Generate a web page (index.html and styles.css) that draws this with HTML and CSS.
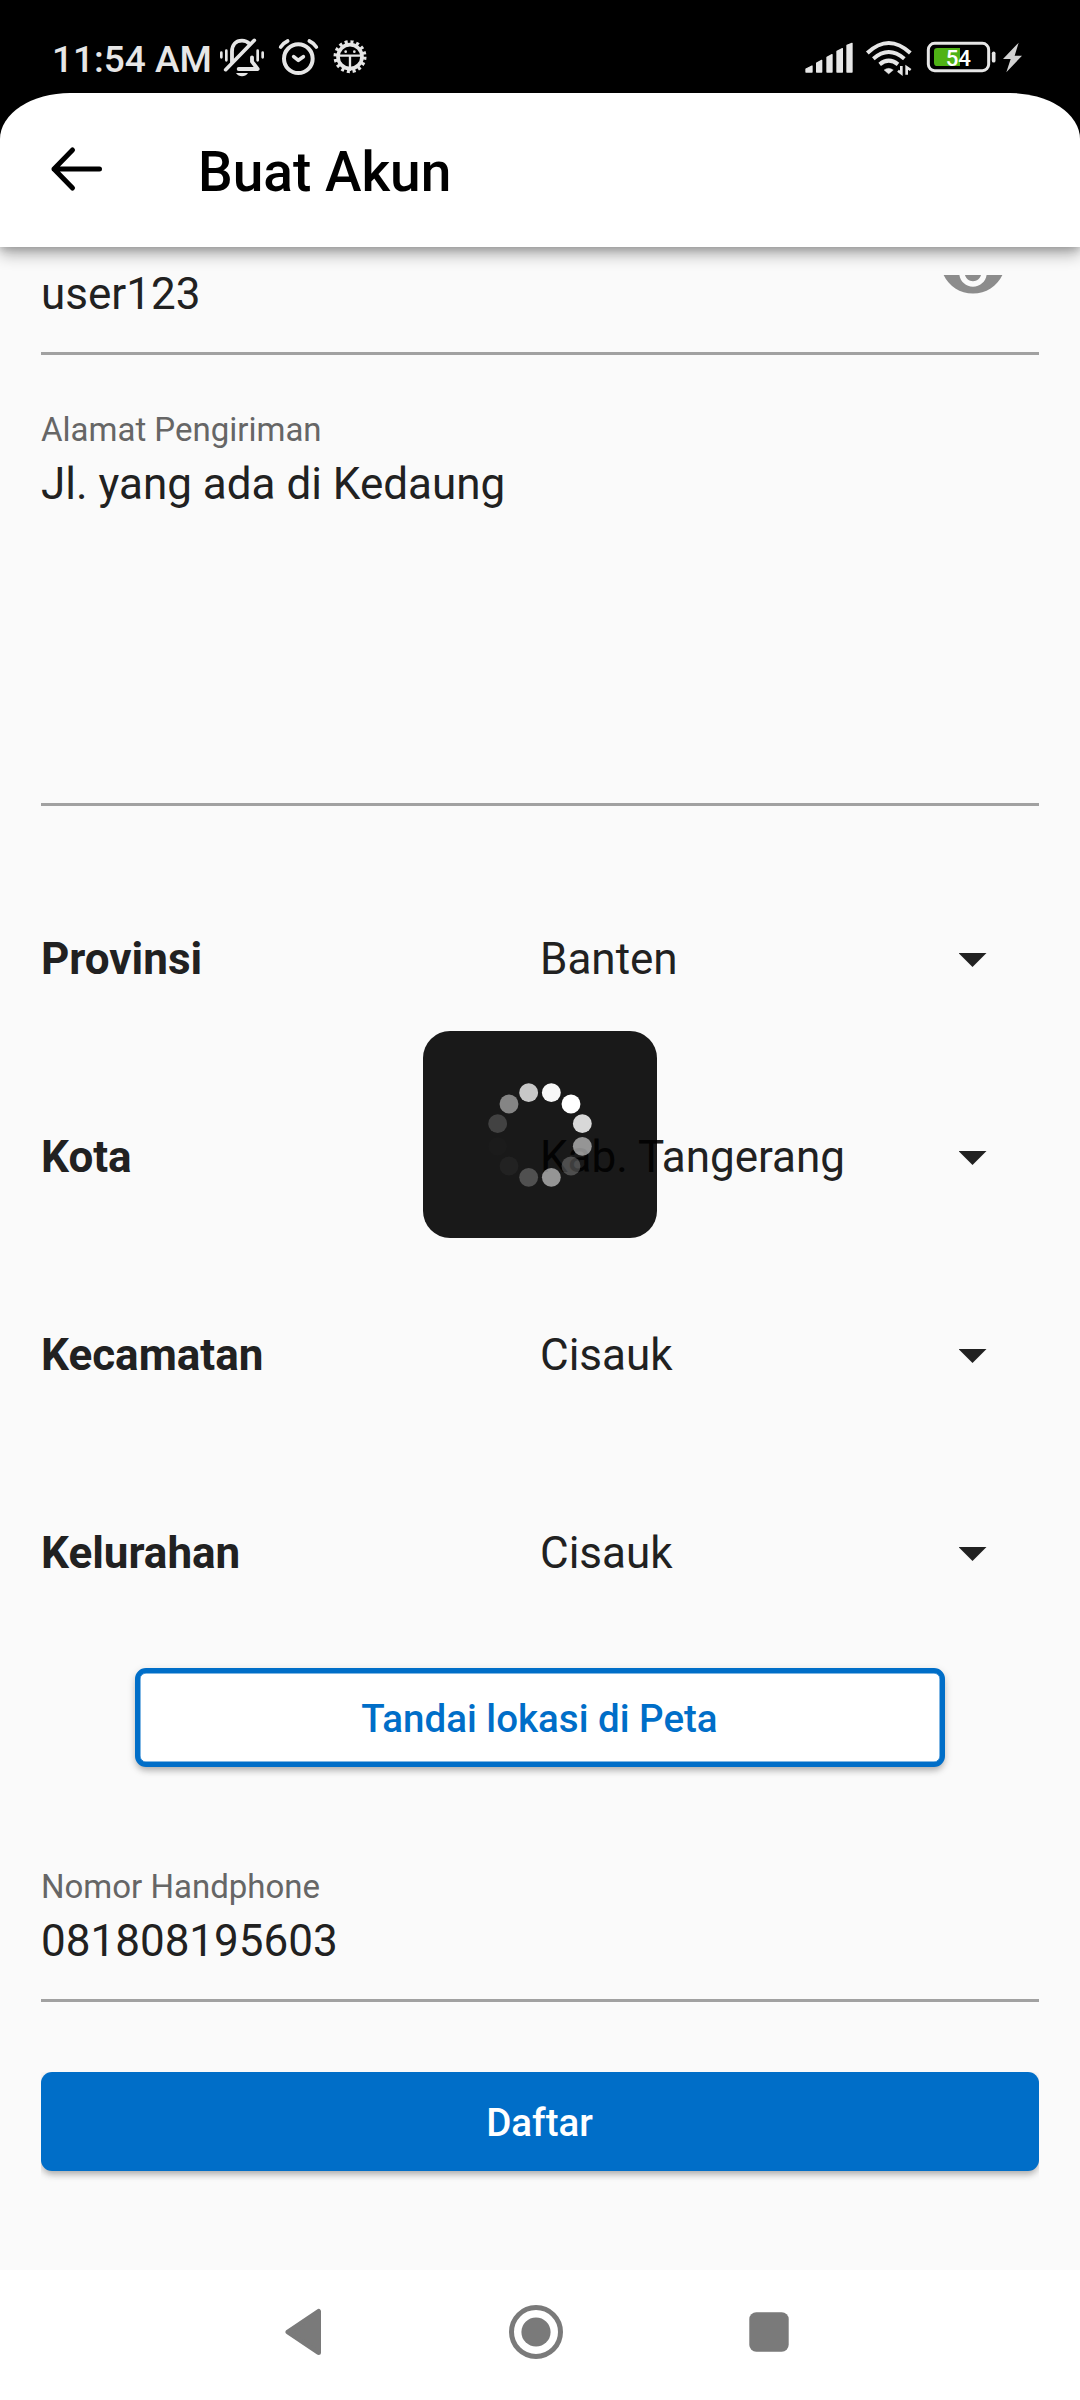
FILE: index.html
```html
<!DOCTYPE html>
<html lang="id">
<head>
<meta charset="utf-8">
<title>Buat Akun</title>
<link rel="stylesheet" href="styles.css">
</head>
<body>
<div class="screen">
  <div class="status-bar">
    <div class="status-left">
      <span class="clock">11:54 AM</span>
      <svg class="status-icons" width="170" height="60" viewBox="0 0 510 180" fill="none" stroke="#e6e6e6" stroke-linecap="round" stroke-linejoin="round">
        <!-- muted bell -->
        <path d="M34 68V82M49 62V91M143 62V91M158 68V82" stroke-width="8"/>
        <path d="M66 96V65C66 44 78 32 96 32C106 32 112 35 118 41M126 82V95L143 117H86" stroke-width="11.500"/>
        <path d="M47 119L133 31" stroke-width="11"/>
        <path d="M78 129H114Q107 139 96 139T78 129Z" fill="#e6e6e6" stroke="none"/>
        <!-- alarm clock -->
        <circle cx="265" cy="86" r="43" stroke-width="12"/>
        <path d="M212 51Q220 39 233 33M298 33Q311 39 319 51" stroke-width="11"/>
        <path d="M251 80L265 91L280 80" stroke-width="11"/>
        <!-- debug gear -->
        <circle cx="420" cy="80" r="44" stroke-width="11" stroke-dasharray="9 8.280" stroke-linecap="butt"/>
        <circle cx="420" cy="80" r="36" stroke-width="11"/>
        <path d="M386 77H454M420 80V120" stroke-width="7"/>
        <circle cx="407" cy="65" r="4" fill="#e6e6e6" stroke="none"/>
        <circle cx="433" cy="65" r="4" fill="#e6e6e6" stroke="none"/>
      </svg>
    </div>
    <svg class="status-right" width="240" height="60" viewBox="0 0 720 180" fill="none" stroke="#e6e6e6">
      <g fill="#e6e6e6" stroke="#e6e6e6" stroke-width="4" stroke-linejoin="round">
        <path d="M33 117L51 108V126H33ZM65 99L80 91V126H65ZM96 82L111 74V126H96ZM126 64L142 56V126H126ZM156 46L171 40V126H156Z"/>
      </g>
      <path d="M217 69Q281 9 346 69M235 86Q281 46 328 86M254 103Q281 81 309 103" stroke-width="12"/>
      <path d="M267 120Q281 110 295 120L281 132Z" fill="#e6e6e6"/>
      <path d="M319 108V130L309 122M335 134V112L347 120" stroke-width="8"/>
      <rect x="400" y="40" width="181" height="82" rx="19" stroke-width="9"/>
      <path d="M596 70V92" stroke-width="11" stroke-linecap="round"/>
      <path d="M427 54H495V108H427Q417 108 417 98V64Q417 54 427 54Z" fill="#4fb215" stroke="none"/>
      <text class="battery-level" x="452" y="108">54</text>
      <path d="M671 38L624 87H647L634 127L681 77H659Z" fill="#d2d2d2" stroke="none"/>
    </svg>
  </div>

  <header class="app-bar">
    <svg class="back" width="54" height="46" viewBox="0 0 54 46" fill="none" stroke="#000" stroke-width="5" stroke-linecap="round" stroke-linejoin="round">
      <path d="M23.500 4L5 23L23.500 42M5 23H50.500"/>
    </svg>
    <h1 class="title">Buat Akun</h1>
  </header>

  <main class="form">
    <div class="field">
      <div class="password-row">
        <span class="value">user123</span>
        <svg class="eye" width="66" height="19" viewBox="0 12.730 24 6.909"><path fill="#8c8c8c" d="M12 4.500C7 4.500 2.730 7.610 1 12c1.730 4.390 6 7.500 11 7.500s9.270-3.110 11-7.500c-1.730-4.390-6-7.500-11-7.500zM12 17c-2.760 0-5-2.240-5-5s2.240-5 5-5 5 2.240 5 5-2.240 5-5 5zm0-8c-1.660 0-3 1.340-3 3s1.340 3 3 3 3-1.340 3-3-1.340-3-3-3z"/></svg>
      </div>
    </div>
    <div class="field address">
      <label class="label">Alamat Pengiriman</label>
      <div class="value">Jl. yang ada di Kedaung</div>
    </div>

    <div class="selects">
      <div class="select"><b class="name">Provinsi</b><span class="value">Banten</span><i class="caret"></i></div>
      <div class="select"><b class="name">Kota</b><span class="value">Kab. Tangerang</span><i class="caret"></i></div>
      <div class="select"><b class="name">Kecamatan</b><span class="value">Cisauk</span><i class="caret"></i></div>
      <div class="select"><b class="name">Kelurahan</b><span class="value">Cisauk</span><i class="caret"></i></div>
    </div>

    <button class="button outlined">Tandai lokasi di Peta</button>

    <div class="field phone">
      <label class="label">Nomor Handphone</label>
      <div class="value">081808195603</div>
    </div>

    <div class="submit"><button class="button filled">Daftar</button></div>
  </main>

  <nav class="nav-bar">
    <svg width="38" height="48" viewBox="0 0 38 48"><path d="M4 24L34.500 3.500V44.500Z" fill="#7a7a7a" stroke="#7a7a7a" stroke-width="5" stroke-linejoin="round"/></svg>
    <svg width="54" height="54" viewBox="0 0 54 54"><circle cx="27" cy="27" r="24.500" fill="none" stroke="#7a7a7a" stroke-width="5"/><circle cx="27" cy="27" r="14.600" fill="#7a7a7a"/></svg>
    <svg width="40" height="40" viewBox="0 0 40 40"><rect x=".3" y=".3" width="39.400" height="39.400" rx="7" fill="#7a7a7a"/></svg>
  </nav>

  <div class="loader">
    <svg width="108" height="108" viewBox="-162 -162 324 324" fill="#fff">
      <circle cx="34" cy="-127" r="28.300" opacity=".97"/>
      <circle cx="93" cy="-93" r="28.300"/>
      <circle cx="127" cy="-34" r="28.300" opacity=".83"/>
      <circle cx="127" cy="34" r="28.300" opacity=".54"/>
      <circle cx="93" cy="93" r="28.300" opacity=".23"/>
      <circle cx="34" cy="127" r="28.300" opacity=".54"/>
      <circle cx="-34" cy="127" r="28.300" opacity=".24"/>
      <circle cx="-93" cy="93" r="28.300" opacity=".04"/>
      <circle cx="-127" cy="34" r="28.300" opacity=".01"/>
      <circle cx="-127" cy="-34" r="28.300" opacity=".18"/>
      <circle cx="-93" cy="-93" r="28.300" opacity=".47"/>
      <circle cx="-34" cy="-127" r="28.300" opacity=".76"/>
    </svg>
  </div>
</div>
</body>
</html>
```
FILE: styles.css
```css
* { box-sizing: border-box; }

body {
  margin: 0;
  background: #000;
  color: #212121;
  font-family: Roboto, sans-serif;
}

.screen {
  position: relative;
  display: flex;
  flex-direction: column;
  width: 1080px;
  height: 2400px;
  overflow: hidden;
  background: linear-gradient(#000 200px, #fafafa 200px);
}

.status-bar {
  display: flex;
  justify-content: space-between;
  height: 93px;
  padding: 30px 45px 0 52px;
}

.status-left { display: flex; }

.clock {
  width: 158px;
  color: #e6e6e6;
  font-size: 37px;
  font-weight: 500;
  line-height: 59px;
  white-space: nowrap;
}

.battery-level {
  fill: #fff;
  stroke: none;
  font-size: 67px;
  font-weight: 500;
}

.app-bar {
  display: flex;
  align-items: center;
  gap: 95px;
  height: 154px;
  padding: 0 49px;
  background: #fff;
  border-radius: 70px 70px 0 0 / 46px 46px 0 0;
  box-shadow: 0 7px 16px rgba(0, 0, 0, .32), 0 3px 7px rgba(0, 0, 0, .14);
  z-index: 1;
}

.back { margin-top: -2px; }

.title {
  margin: 4px 0 0;
  color: #000;
  font-size: 55px;
  font-weight: 500;
  line-height: 64px;
}

.form {
  display: flex;
  flex-direction: column;
  height: 2023px;
  padding: 21px 41px 0;
  background: #fafafa;
}

.field {
  padding-bottom: 32px;
  border-bottom: 3px solid #a1a1a1;
}

.password-row {
  display: flex;
  justify-content: space-between;
  padding-right: 33px;
}

.eye { margin-top: 7px; }

.value {
  font-size: 44px;
  line-height: 52px;
}

.label {
  display: block;
  margin-bottom: 8px;
  color: #666;
  font-size: 33px;
  line-height: 40px;
}

.address {
  height: 396px;
  margin-top: 55px;
}

.selects { margin-top: 54px; }

.select {
  display: grid;
  grid-template-columns: 499px 418.500px 28px;
  align-items: center;
  height: 198px;
}

.name {
  font-size: 44px;
  font-weight: 700;
  line-height: 52px;
}

.caret {
  width: 28px;
  height: 14px;
  margin-top: 2px;
  background: #212121;
  clip-path: polygon(0 0, 100% 0, 50% 100%);
}

.button {
  height: 99px;
  padding: 0;
  border: 0;
  border-radius: 11px;
  font-family: inherit;
  font-size: 38.500px;
  font-weight: 500;
  line-height: 99px;
  box-shadow: 0 5px 6px -2px rgba(0, 0, 0, .2), 0 3px 8px rgba(0, 0, 0, .16);
}

.outlined {
  width: 810px;
  margin: 16px auto 0;
  padding-right: 1px;
  border: 5px solid #006ec8;
  background: #fff;
  color: #006ec8;
  line-height: 91px;
  box-shadow: inset 0 0 0 .5px #006ec8, 0 5px 6px -2px rgba(0, 0, 0, .2), 0 3px 8px rgba(0, 0, 0, .16);
}

.phone { margin-top: 100px; }

.submit {
  display: flex;
  margin-top: 70px;
  padding-bottom: 20px;
  overflow: hidden;
}

.filled {
  flex: 1;
  padding-right: 1px;
  background: #006ec8;
  color: #fff;
  line-height: 101px;
}

.nav-bar {
  display: flex;
  align-items: center;
  height: 130px;
  padding: 0 291px 6px 284px;
  justify-content: space-between;
  background: #fff;
}

.loader {
  position: absolute;
  top: 1031px;
  left: 423px;
  z-index: 2;
  display: flex;
  align-items: center;
  justify-content: center;
  width: 234px;
  height: 207px;
  border-radius: 27px;
  background: rgba(0, 0, 0, .9);
}
```
